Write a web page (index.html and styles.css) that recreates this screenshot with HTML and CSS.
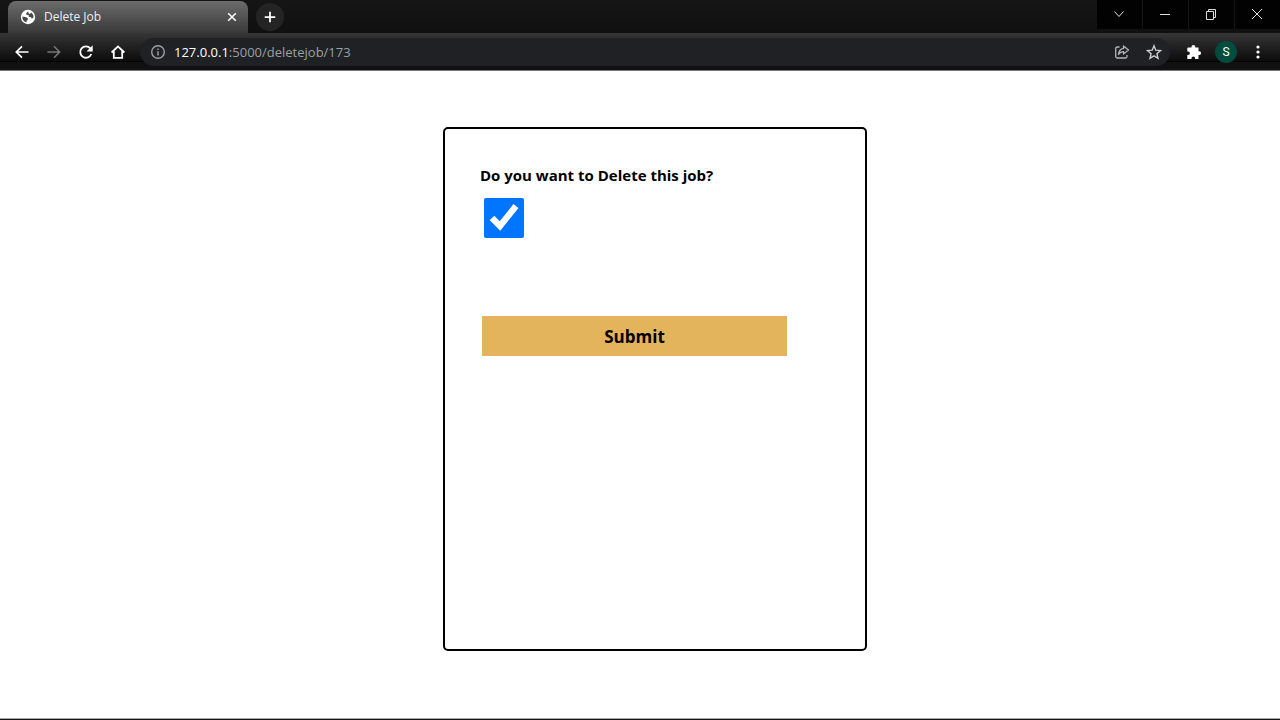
FILE: index.html
```html
<!DOCTYPE html>
<html lang="en">
<head>
<meta charset="utf-8">
<meta name="viewport" content="width=device-width, initial-scale=1">
<title>Delete Job</title>
<link rel="stylesheet" href="styles.css">
</head>
<body>
<header class="browser">
  <div class="tabstrip">
    <div class="tab">
      <svg class="tab-icon" viewBox="0 0 16 16" aria-hidden="true"><circle cx="8" cy="8" r="7.2" fill="#fff"/><path d="M8.3 2.2 6.2 4.2 6.3 5.8 8.6 6.1 8.8 7.7 11 8.3 11.8 9.7 13.5 8.4A5.6 5.6 0 0 0 11.2 3.4L9.8 5 8.6 4.2ZM2.4 7.6 6.4 8.2 8 9.7 7.6 11.3 6.6 11.6 6.4 13.4A5.6 5.6 0 0 1 2.4 7.6Z" fill="#484848"/></svg>
      <span class="tab-title">Delete Job</span>
      <button class="icon-btn tab-close" aria-label="Close tab"><svg viewBox="0 0 16 16"><path d="m4.2 4.2 7.6 7.6m0-7.6-7.6 7.6" fill="none" stroke="#fff" stroke-width="1.5"/></svg></button>
    </div>
    <button class="new-tab" aria-label="New tab"><svg viewBox="0 0 16 16"><path d="M8 2v12M2 8h12" stroke="#fff" stroke-width="2"/></svg></button>
    <div class="window-controls">
      <button class="window-btn" aria-label="Search tabs"><svg viewBox="0 0 16 16"><path d="m3.500 5.500 4.500 5 4.500-5"/></svg></button>
      <button class="window-btn" aria-label="Minimize"><svg viewBox="0 0 16 16"><path d="M3 8.500h10"/></svg></button>
      <button class="window-btn" aria-label="Restore"><svg viewBox="0 0 16 16"><path d="M3.500 5.500h7v8h-7zM5.500 5.500v-2h7v8h-2"/></svg></button>
      <button class="window-btn" aria-label="Close"><svg viewBox="0 0 16 16"><path d="m3 3 10 10m0-10L3 13"/></svg></button>
    </div>
  </div>
  <div class="toolbar">
    <nav class="nav-buttons">
      <button class="icon-btn" aria-label="Back"><svg viewBox="0 0 16 16"><path d="M14.500 8H2.500M8 2.300 2.300 8 8 13.700" fill="none" stroke="#fff" stroke-width="1.700"/></svg></button>
      <button class="icon-btn" aria-label="Forward"><svg viewBox="0 0 16 16"><path d="M1.500 8h12M8 2.300 13.700 8 8 13.700" fill="none" stroke="#777" stroke-width="1.500"/></svg></button>
      <button class="icon-btn" aria-label="Reload"><svg viewBox="0 0 16 16"><path d="M13.300 10A5.700 5.700 0 1 1 12.300 4.300" fill="none" stroke="#fff" stroke-width="1.800"/><path d="M14.700 1.300v6.200H8.500Z" fill="#fff"/></svg></button>
      <button class="icon-btn" aria-label="Home"><svg viewBox="0 0 16 16"><path d="M1.600 8.500 8 2.400l6.400 6.100M3.800 7v6.800h8.400V7" fill="none" stroke="#fff" stroke-width="1.800"/></svg></button>
    </nav>
    <div class="address">
      <svg class="info" viewBox="0 0 16 16" aria-hidden="true"><circle cx="8" cy="8" r="6.300" fill="none" stroke="#9aa0a6" stroke-width="1.400"/><path d="M8 4.400v1.600M8 7.200v4.400" stroke="#9aa0a6" stroke-width="1.500"/></svg>
      <div class="url"><span class="host">127.0.0.1</span>:5000/deletejob/173</div>
      <button class="icon-btn" aria-label="Share"><svg viewBox="0 0 16 16"><path d="M5.500 3H3.200Q1.700 3 1.700 4.500v8Q1.700 14 3.200 14h8.300q1.500 0 1.500-1.500V11M9.500 2l5 4-5 4V7.700Q6.500 7.500 4.500 10.500 5 5.200 9.500 4.400Z" fill="none" stroke="#b5b5b5" stroke-width="1.300" stroke-linejoin="round"/></svg></button>
      <button class="icon-btn" aria-label="Bookmark"><svg viewBox="0 0 16 16"><path d="m8 1.800 1.800 4.400 4.700.4-3.600 3.100 1.100 4.600-4-2.500-4 2.500 1.100-4.600-3.600-3.100 4.700-.4Z" fill="none" stroke="#ccc" stroke-width="1.400"/></svg></button>
    </div>
    <div class="actions">
      <button class="icon-btn" aria-label="Extensions"><svg viewBox="0 0 16 16"><path d="M2.300 3.600h3.200v-.8a1.900 1.900 0 0 1 3.800 0v.8h3.200v3.600h.7a1.900 1.900 0 0 1 0 3.800h-.7v4H9.100v-.8a1.800 1.800 0 0 0-3.600 0v.8H1.300v-3.900h.8a1.800 1.800 0 0 0 0-3.600h-.8V4.600q0-1 1-1Z" fill="#fff"/></svg></button>
      <button class="avatar" aria-label="Profile S">S</button>
      <button class="icon-btn" aria-label="Menu"><svg viewBox="0 0 16 16"><g fill="#fff"><circle cx="8" cy="3" r="1.600"/><circle cx="8" cy="8" r="1.600"/><circle cx="8" cy="13" r="1.600"/></g></svg></button>
    </div>
  </div>
</header>
<main class="page">
  <form class="card">
    <label class="question" for="confirm">Do you want to Delete this job?</label>
    <input class="confirm" type="checkbox" id="confirm" checked>
    <button class="submit" type="submit">Submit</button>
  </form>
</main>
</body>
</html>
```
FILE: styles.css
```css
* {
  box-sizing: border-box;
}

body {
  margin: 0;
  min-height: 100vh;
  display: flex;
  flex-direction: column;
  background: #fff;
  border-bottom: 1px solid #151515;
  box-shadow: inset 0 -1px #aaa;
  font-family: "Open Sans", "Noto Sans", sans-serif;
}

button {
  padding: 0;
  border: 0;
  background: none;
  color: inherit;
  font-family: inherit;
}

svg {
  display: block;
  width: 16px;
  height: 16px;
}

.browser {
  background: #111;
  border-bottom: 1px solid #777;
  color: #fff;
}

.tabstrip {
  display: flex;
  height: 33px;
  padding-left: 8px;
  background: linear-gradient(#151515, #101010);
}

.tab {
  display: flex;
  align-items: center;
  width: 240px;
  margin-top: 1px;
  padding: 0 8px 0 12px;
  border-radius: 8px 8px 0 0;
  background: linear-gradient(#6c6c6c, #393939);
}

.tab-title {
  flex: 1;
  margin-left: 8px;
  color: #eee;
  font-size: 12px;
  line-height: 16px;
}

.icon-btn {
  flex: none;
  width: 16px;
  height: 16px;
}

.new-tab {
  display: grid;
  place-items: center;
  width: 28px;
  height: 28px;
  margin: 3px 0 0 8px;
  border-radius: 50%;
  background: #242424;
}

.new-tab svg {
  width: 14px;
  height: 14px;
}

.window-controls {
  display: flex;
  gap: 1px;
  height: 29px;
  margin-left: auto;
  background: #151515;
}

.window-btn {
  display: grid;
  place-items: center;
  width: 45px;
  padding: 0 1px 1px 0;
  background: #020202;
}

.window-btn path {
  fill: none;
  stroke: #ddd;
  stroke-width: 1;
}

.toolbar {
  display: flex;
  align-items: center;
  height: 37px;
  padding: 0 14px;
  background: linear-gradient(#363636, #0c0c0c 28px, #000 28px, #000 29px, #111 29px);
}

.nav-buttons {
  display: flex;
  gap: 16px;
}

.address {
  flex: 1;
  display: flex;
  align-items: center;
  gap: 16px;
  height: 28px;
  margin: 0 16px 0 14px;
  padding: 0 8px 0 10px;
  border-radius: 14px;
  background: #202124;
}

.info {
  flex: none;
}

.url {
  flex: 1;
  margin-left: -8px;
  color: #9aa0a6;
  font-size: 13px;
  line-height: 20px;
}

.host {
  color: #fff;
}

.actions {
  display: flex;
  align-items: center;
  gap: 13px;
}

.avatar {
  width: 22px;
  height: 22px;
  border-radius: 50%;
  background: #004d40;
  font-family: Roboto, sans-serif;
  font-size: 12px;
}

.page {
  flex: 1;
  display: flex;
  justify-content: center;
  padding: 56px 0 68px 30px;
}

.card {
  display: flex;
  flex-direction: column;
  align-items: flex-start;
  width: 100%;
  max-width: 424px;
  padding: 34px 78px 36px 35px;
  border: 2px solid #000;
  border-radius: 5px;
}

.question {
  font-size: 15px;
  font-weight: 700;
  line-height: 24px;
}

.confirm {
  width: 40px;
  height: 40px;
  margin: 11px 4px 9px;
}

.submit {
  align-self: stretch;
  height: 40px;
  margin: 69px 0 0 2px;
  background: #e4b45c;
  color: #000;
  font-size: 17px;
  font-weight: 700;
}
```
